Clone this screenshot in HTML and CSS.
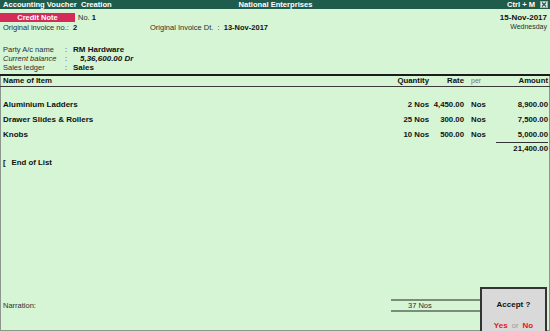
FILE: index.html
```html
<!DOCTYPE html>
<html lang="en">
<head>
  <meta charset="UTF-8">
  <title>Accounting Voucher Creation</title>
  <link rel="stylesheet" href="styles.css">
</head>
<body>
  <div class="screen">
    <div class="titlebar">
      <span>Accounting Voucher&nbsp; Creation</span>
      <span class="company">National Enterprises</span>
      <span class="hotkey">Ctrl + M
        <svg class="close" viewBox="0 0 8 7" width="8" height="7">
          <rect x="0.5" y="0.5" width="7" height="6" fill="#e8efe9" stroke="#9fb3a8"/>
          <path d="M2 1.5 L6 5.5 M6 1.5 L2 5.5" stroke="#1f5c4b" stroke-width="1.2"/>
        </svg>
      </span>
    </div>

    <div class="head">
      <div class="head-left">
        <div class="vrow">
          <span class="badge">Credit Note</span>
          <span class="vno">No. <b>1</b></span>
        </div>
        <div class="orig">
          <span class="orig-no">Original invoice no.: &nbsp;<b>2</b></span>
          <span>Original Invoice Dt. &nbsp;: &nbsp;<b>13-Nov-2017</b></span>
        </div>
        <div class="party">
          <span>Party A/c name</span><span>:</span><b>RM Hardware</b>
          <i>Current balance</i><span>:</span><b class="bal"><i>5,36,600.00 Dr</i></b>
          <span>Sales ledger</span><span>:</span><b>Sales</b>
        </div>
      </div>
      <div class="head-right">
        <b>15-Nov-2017</b>
        <span class="day">Wednesday</span>
      </div>
    </div>

    <div class="body">
      <div class="row th">
        <b>Name of Item</b>
        <b class="num">Quantity</b>
        <b class="num">Rate</b>
        <span class="per">per</span>
        <b class="num">Amount</b>
      </div>

      <div class="list">
        <div class="row item">
          <b>Aluminium Ladders</b>
          <b class="num">2 Nos</b>
          <b class="num">4,450.00</b>
          <b class="per">Nos</b>
          <b class="num">8,900.00</b>
        </div>
        <div class="row item">
          <b>Drawer Slides &amp; Rollers</b>
          <b class="num">25 Nos</b>
          <b class="num">300.00</b>
          <b class="per">Nos</b>
          <b class="num">7,500.00</b>
        </div>
        <div class="row item">
          <b>Knobs</b>
          <b class="num">10 Nos</b>
          <b class="num">500.00</b>
          <b class="per">Nos</b>
          <b class="num">5,000.00</b>
        </div>
        <div class="row total">
          <b class="num sum">21,400.00</b>
        </div>
        <div class="end"><b>[</b><b class="end-text">End of List</b></div>
      </div>

      <div class="foot">
        <span class="narration">Narration:</span>
        <span class="qty-total">37 Nos</span>
      </div>
    </div>

    <div class="accept">
      <b class="accept-q">Accept ?</b>
      <div class="answers"><b class="red">Yes</b> <span class="or">or</span> <b class="red">No</b></div>
    </div>
  </div>
</body>
</html>
```

FILE: styles.css
```css
/* Tally style voucher screen */
body {
  margin: 0;
  background: #d5f5d5;
  font-family: "Liberation Sans", Arial, sans-serif;
  font-size: 7.5px;
  color: #2e2e2e;
}
b {
  color: #111;
}
.screen {
  position: relative;
  height: 331px;
  display: flex;
  flex-direction: column;
  overflow: hidden;
}
/* Title bar */
.titlebar {
  height: 9px;
  line-height: 9px;
  background: #1f5c4b;
  color: #fff;
  font-weight: bold;
  font-size: 7.6px;
  display: grid;
  grid-template-columns: 1fr auto 1fr;
  padding: 0 2px 0 3px;
}
.hotkey {
  justify-self: end;
  display: flex;
  align-items: center;
  gap: 5px;
}
.close {
  display: block;
}
/* Voucher head */
.head {
  display: flex;
  justify-content: space-between;
  padding-top: 4px;
}
.vrow {
  display: flex;
  line-height: 9px;
}
.badge {
  width: 75px;
  background: #d52b5a;
  color: #fff;
  font-weight: bold;
  text-align: center;
}
.vno {
  margin-left: 3px;
}
.orig {
  display: flex;
  line-height: 9px;
  margin-top: 1px;
  padding-left: 3px;
}
.orig-no {
  width: 147px;
}
.party {
  display: grid;
  grid-template-columns: 62px 8px auto;
  line-height: 9px;
  margin-top: 13px;
  padding-left: 3px;
}
.party b {
  font-size: 8px;
}
.bal {
  padding-left: 7px;
}
.head-right {
  display: flex;
  flex-direction: column;
  align-items: flex-end;
  line-height: 9px;
  padding-right: 3px;
  font-size: 8px;
}
.day {
  font-size: 7px;
}
/* Items */
.body {
  flex: 1;
  display: flex;
  flex-direction: column;
  margin-top: 2px;
  border: 1px solid #8c968c;
  border-top: none;
}
.row {
  display: grid;
  grid-template-columns: 1fr 57px 35px 24px 60px;
  padding: 0 1px 0 2px;
  font-size: 7.8px;
}
.th {
  line-height: 10px;
  border-top: 2px solid #1c1c1c;
  border-bottom: 1px solid #3a3a3a;
  margin: 0 -1px;
  padding: 0 2px 0 3px;
}
.item b:first-child {
  font-size: 8px;
}
.num {
  text-align: right;
}
.per {
  padding-left: 7px;
}
.th .per {
  color: #777;
  font-size: 7px;
}
.list {
  flex: 1;
  padding-top: 10px;
}
.item {
  line-height: 15px;
}
.total {
  line-height: 11px;
}
.sum {
  grid-column: 5;
  margin-left: 8px;
  border-top: 1px solid #333;
}
.end {
  line-height: 14px;
  margin-top: 2px;
  padding-left: 2px;
  font-size: 7.8px;
}
.end-text {
  margin-left: 6px;
}
/* Footer */
.foot {
  display: flex;
  align-items: center;
  margin-bottom: 18px;
  padding-left: 2px;
}
.narration {
  flex: 1;
}
.qty-total {
  width: 74px;
  padding-left: 17px;
  line-height: 9px;
  border-top: 2px solid #7c8c7c;
  border-bottom: 2px solid #7c8c7c;
  margin-right: 67px;
}
/* Accept dialog */
.accept {
  position: absolute;
  left: 480px;
  top: 287px;
  width: 67px;
  height: 46px;
  box-sizing: border-box;
  background: #d9d9d9;
  border: 2px solid #333;
  text-align: center;
  line-height: 9px;
}
.accept-q {
  display: block;
  margin-top: 11px;
  font-size: 8px;
}
.answers {
  margin-top: 12px;
}
.red {
  color: #e8141c;
  font-size: 8px;
}
.or {
  color: #999;
  margin: 0 2px;
}
```
